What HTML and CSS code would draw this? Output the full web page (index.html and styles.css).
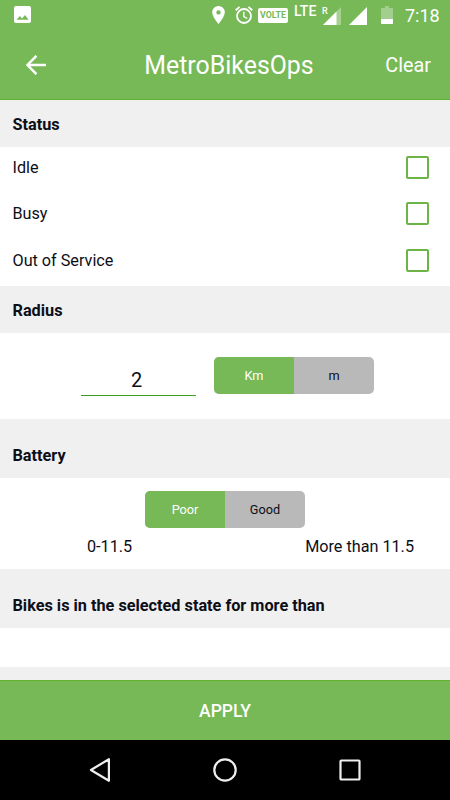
FILE: index.html
```html
<!DOCTYPE html>
<html lang="en">
<head>
<meta charset="utf-8">
<title>MetroBikesOps</title>
<link rel="stylesheet" href="styles.css">
</head>
<body>
<div class="statusbar">
  <svg class="picture" width="17" height="17" viewBox="0 0 17 17"><rect width="17" height="17" rx="2" fill="#fff"/><path d="M2.600 13.800 5.800 10l2.300 2.400L11 9l3.600 4.800z" fill="#77b957"/></svg>
  <svg class="pin" width="13" height="18" viewBox="0 0 13 18"><path fill="#fff" fill-rule="evenodd" d="M6.500 0A6.300 6.300 0 0 0 .2 6.300C.2 11 6.500 18 6.500 18s6.300-7 6.300-11.700A6.300 6.300 0 0 0 6.500 0zm0 4.200a2.200 2.200 0 1 1 0 4.400 2.200 2.200 0 0 1 0-4.400z"/></svg>
  <svg class="alarm" width="18" height="18" viewBox="0 0 18 18" fill="none" stroke="#fff" stroke-width="1.800"><circle cx="9" cy="10" r="7"/><path d="M.7 4.200 4.600.9M17.300 4.200 13.400.9"/><path d="M8.800 5.800v4.700l3.400 2" stroke-width="1.400"/></svg>
  <span class="volte">VOLTE</span>
  <span class="lte">LTE</span>
  <span class="signal-roaming"><svg width="18" height="18" viewBox="0 0 18 18"><path d="M18 0v18H0z" fill="#fff" opacity=".35"/><path d="M13.500 4.500V18H0z" fill="#fff"/></svg><b class="roaming">R</b></span>
  <svg class="signal" width="18" height="18" viewBox="0 0 18 18"><path d="M18 0v18H0z" fill="#fff"/></svg>
  <svg class="battery" width="12" height="18" viewBox="0 0 12 18"><path d="M4 0h4v2h3.200q.8 0 .8.8V13H0V2.800q0-.8.8-.8H4z" fill="#fff" opacity=".32"/><path d="M0 13h12v4.200q0 .8-.8.8H.8q-.8 0-.8-.8z" fill="#fff"/></svg>
  <span class="clock">7:18</span>
</div>
<header class="appbar">
  <svg class="back" width="20" height="20" viewBox="0 0 20 20" fill="none" stroke="#fff" stroke-width="2.400"><path d="M20 10H1.600M10.400.8 1.400 10l9 9.200"/></svg>
  <h1>MetroBikesOps</h1>
  <span class="clear">Clear</span>
</header>
<main>
  <h2 class="heading">Status</h2>
  <div class="options">
    <label class="option">Idle<i class="box"></i></label>
    <label class="option">Busy<i class="box"></i></label>
    <label class="option">Out of Service<i class="box"></i></label>
  </div>
  <h2 class="heading">Radius</h2>
  <div class="radius">
    <div class="field">2</div>
    <div class="toggle"><span class="on">Km</span><span>m</span></div>
  </div>
  <h2 class="heading tall">Battery</h2>
  <div class="charge">
    <div class="toggle"><span class="on">Poor</span><span>Good</span></div>
    <div class="ranges"><span>0-11.5</span><span>More than 11.5</span></div>
  </div>
  <h2 class="heading tall">Bikes is in the selected state for more than</h2>
  <div class="blank"></div>
</main>
<div class="apply">APPLY</div>
<nav class="navbar">
  <svg width="24" height="26" viewBox="0 0 24 26"><path d="M20.900 2.200v21.600L2.900 13z"/></svg>
  <svg width="24" height="26" viewBox="0 0 24 26"><circle cx="12" cy="13" r="10.700"/></svg>
  <svg width="24" height="26" viewBox="0 0 24 26"><rect x="2.500" y="3.500" width="19" height="19" rx=".8"/></svg>
</nav>
</body>
</html>
```
FILE: styles.css
```css
* { box-sizing: border-box; }
body {
  margin: 0;
  width: 450px;
  height: 800px;
  display: flex;
  flex-direction: column;
  overflow: hidden;
  background: #fff;
  color: #0c0e18;
  font-family: Roboto, "Liberation Sans", sans-serif;
}
svg { display: block; flex: none; }
.statusbar {
  height: 32px;
  flex: none;
  display: flex;
  align-items: flex-start;
  padding: 6px 0 0 14px;
  background: #77b957;
  color: #fff;
}
.pin { margin-left: 181px; }
.alarm { margin-left: 10px; }
.volte {
  width: 30px;
  height: 15px;
  margin: 2px 0 0 5px;
  border-radius: 2px;
  background: #fff;
  color: #77b957;
  font-size: 8.800px;
  font-weight: 700;
  line-height: 15px;
  text-align: center;
}
.lte {
  width: 23px;
  margin-left: 6px;
  font-size: 14px;
  font-weight: 500;
  line-height: 11px;
}
.signal-roaming { position: relative; margin: 1px 0 0 6px; }
.roaming {
  position: absolute;
  left: -1px;
  top: 0;
  font-size: 9px;
  font-weight: 500;
  line-height: 9px;
}
.signal { margin: 1px 0 0 8px; }
.battery { margin-left: 14px; }
.clock {
  margin-left: 12px;
  font-size: 18px;
  line-height: 20px;
}
.appbar {
  height: 68px;
  flex: none;
  display: grid;
  grid-template-columns: 100px 1fr 100px;
  align-items: center;
  background: #77b957;
  border-bottom: 1px solid #62b12c;
  color: #fff;
}
.back { margin: -1px 0 0 26px; }
.appbar h1 {
  margin: 1px 0 0 8px;
  font-size: 24.900px;
  font-weight: 400;
  line-height: 30px;
  text-align: center;
}
.clear {
  padding-right: 19px;
  font-size: 19.800px;
  text-align: right;
}
main {
  height: 580px;
  flex: none;
  background: #f0f0f0;
}
.heading {
  height: 47px;
  margin: 0;
  padding: 15px 12.500px 0;
  font-size: 16.250px;
  font-weight: 700;
  line-height: 20px;
}
.heading.tall { height: 59px; padding-top: 27px; }
.options {
  height: 139px;
  background: #fff;
}
.option {
  height: 46.400px;
  display: flex;
  align-items: flex-start;
  justify-content: space-between;
  padding: 9px 21px 0 12.500px;
  font-size: 16.200px;
  line-height: 24px;
}
.box {
  width: 23px;
  height: 23px;
  border: 2px solid #6cb446;
  border-radius: 2px;
}
.radius {
  height: 86px;
  display: flex;
  align-items: flex-start;
  padding: 24px 76px 0 81px;
  background: #fff;
}
.field {
  width: 115px;
  height: 39px;
  margin-right: 18px;
  padding: 11px 4px 0 0;
  border-bottom: 1px solid #38a01c;
  font-size: 20px;
  line-height: 25px;
  text-align: center;
}
.toggle {
  width: 160px;
  height: 37px;
  display: flex;
  overflow: hidden;
  border-radius: 5px;
  background: #b9b9b9;
  font-size: 12.700px;
  line-height: 38px;
  text-align: center;
}
.toggle span { width: 80px; }
.toggle .on { background: #77b957; color: #fff; }
.charge {
  height: 91px;
  padding-top: 13px;
  background: #fff;
}
.charge .toggle { margin: 0 auto; }
.ranges {
  display: flex;
  justify-content: space-between;
  margin-top: 7px;
  padding: 0 36px 0 87px;
  font-size: 16.200px;
  line-height: 23px;
}
.blank { height: 39px; background: #fff; }
.apply {
  height: 60px;
  flex: none;
  border-top: 1px solid #62b12c;
  background: #77b957;
  color: #fff;
  font-size: 17.500px;
  font-weight: 500;
  line-height: 60px;
  text-align: center;
}
.navbar {
  height: 60px;
  flex: none;
  display: flex;
  align-items: center;
  justify-content: space-between;
  padding: 0 88px;
  background: #000;
}
.navbar svg {
  fill: none;
  stroke: #eee;
  stroke-width: 2.200;
  stroke-linejoin: round;
}
```
